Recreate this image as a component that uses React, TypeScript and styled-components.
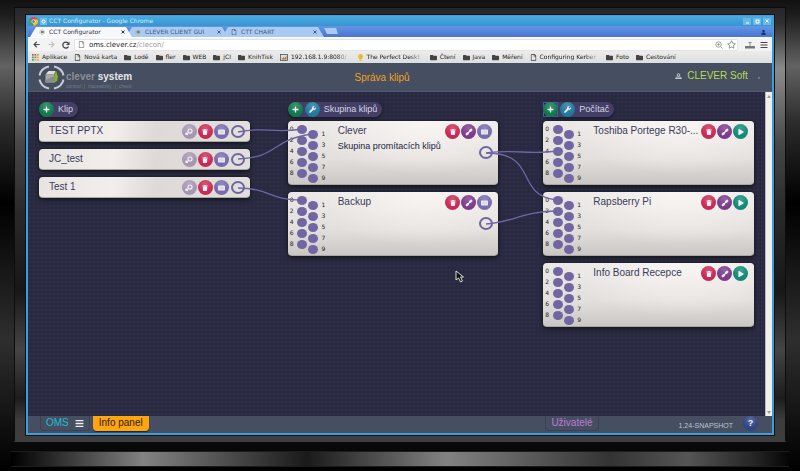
import React from "react";
import styled, { createGlobalStyle, css } from "styled-components";
import {
  FaPlus,
  FaWrench,
  FaTrash,
  FaLink,
  FaPlay,
  FaUser,
  FaFolder,
  FaBars,
  FaRegStar,
  FaRegFile,
  FaLightbulb,
  FaArrowLeft,
  FaArrowRight,
} from "react-icons/fa";

const sans = `"Liberation Sans", Arial, sans-serif`;
const ui = `"DejaVu Sans", Verdana, sans-serif`;

const GlobalStyle = createGlobalStyle`
  * { box-sizing: border-box; }
  body { margin: 0; background: #000; font-family: ${sans}; }
  button { font: inherit; padding: 0; margin: 0; border: 0; background: none; color: inherit; cursor: pointer; }
  a { color: inherit; text-decoration: none; }
  h1, h2, h3, p { margin: 0; font-weight: 400; }
  svg { display: block; flex: none; }
`;

/* ---------- display housing ---------- */

const Screen = styled.div`
  min-height: 100vh;
  display: flex;
  flex-direction: column;
  padding: 7px 14px 4px;
  background: linear-gradient(#121212 0%, #1c1c1c 3%, #626262 14%, #2c2c2c 26%, #000 43%, #2e2e2e 72%, #0c0c0c 93%, #000 100%);
`;

const Bezel = styled.div`
  flex: 1;
  display: flex;
  padding: 7px 11px 6px 11px;
  border: 1px solid #0c0c0c;
  border-bottom-color: #3e3e3e;
  background: linear-gradient(#262626 0%, #333 4%, #8a8a8a 14%, #7d7d7d 18%, #454545 32%, #282828 48%, #171717 65%, #454545 79%, #1c1c1c 90%, #3c3c3c 95%, #3e3e3e 100%);
`;

const Stand = styled.div`
  height: 16px;
  margin: 9px -3px 0;
  border-top: 1px solid #1c1c1c;
  border-bottom: 1px solid #1c1c1c;
  background: linear-gradient(90deg, #000 0%, #262626 5%, #828282 17%, #1a1a1a 38%, #828282 56%, #333 77%, #555 87%, #222 96%, #050505 100%);
`;

const Browser = styled.div`
  flex: 1;
  min-width: 0;
  display: flex;
  flex-direction: column;
  border: 2px solid #3d9cdb;
  border-top-width: 1px;
  outline: 1px solid #111;
  background: #2a2b42;
`;

/* ---------- browser chrome ---------- */

const TitleBar = styled.div`
  display: flex;
  align-items: center;
  gap: 2px;
  height: 10px;
  padding: 0 1px;
  background: linear-gradient(#49abe0, #3794d2);
  color: #d5ecfa;
  font: 6px/10px ${ui};
`;

const TitleText = styled.h1`
  flex: 1;
  font: inherit;
`;

const WindowButton = styled.button`
  width: 8px;
  height: 7px;
  background: #68b9e8;
  display: grid;
  place-items: center;
  color: #fff;
`;

const TabStrip = styled.div`
  display: flex;
  align-items: flex-end;
  height: 11px;
  padding-left: 2px;
  background: linear-gradient(#6496e6, #4974cf);
`;

const Tab = styled.button<{ $active?: boolean }>`
  display: flex;
  align-items: center;
  gap: 4px;
  width: 102px;
  height: 10px;
  margin-right: -6px;
  padding: 0 7px 0 9px;
  position: relative;
  z-index: ${(p) => (p.$active ? 1 : 0)};
  clip-path: polygon(0 100%, 6px 0, calc(100% - 6px) 0, 100% 100%);
  background: ${(p) => (p.$active ? "#f6f8fb" : "#a9cbf3")};
  color: ${(p) => (p.$active ? "#333" : "#3f5878")};
  font: 6px/10px ${ui};
  white-space: nowrap;
  text-align: left;
  & > span { flex: 1; }
`;

const NewTab = styled.button`
  width: 14px;
  height: 6px;
  margin: 0 0 3px 6px;
  background: #a9cbf3;
  clip-path: polygon(0 0, 12px 0, 100% 100%, 3px 100%);
`;

const UserBadge = styled.button`
  display: grid;
  place-items: center;
  width: 12px;
  height: 8px;
  margin: 0 3px 1px auto;
  color: #16316b;
`;

const Toolbar = styled.div`
  display: flex;
  align-items: center;
  gap: 7px;
  height: 14px;
  padding: 0 4px;
  background: #f3f3f3;
  border-top: 1px solid #fff;
  color: #4b4b4b;
`;

const IconButton = styled.button<{ $dim?: boolean }>`
  display: grid;
  place-items: center;
  width: 8px;
  height: 10px;
  color: ${(p) => (p.$dim ? "#c0c0c0" : "#444")};
`;

const Omnibox = styled.div`
  flex: 1;
  display: flex;
  align-items: center;
  gap: 4px;
  height: 12px;
  margin-left: -3px;
  padding: 0 1px 0 3px;
  border: 1px solid #e4e4e4;
  border-radius: 2px;
  background: #fff;
  color: #888;
`;

const Address = styled.div`
  flex: 1;
  min-width: 0;
  font: 7px/10px ${ui};
  color: #999;
  b { font-weight: 400; color: #222; }
`;

const Bookmarks = styled.nav`
  display: flex;
  align-items: center;
  gap: 7px;
  height: 12px;
  padding: 0 4px;
  overflow: hidden;
  background: linear-gradient(#ececec, #dedede);
  color: #222;
  font: 6px/12px ${ui};
  white-space: nowrap;
`;

const Bookmark = styled.a<{ $fade?: boolean }>`
  display: flex;
  align-items: center;
  gap: 3px;
  svg { color: #444; }
  ${(p) =>
    p.$fade &&
    css`
      padding-right: 3px;
      mask-image: linear-gradient(90deg, #000 80%, #0003 96%);
    `}
`;

const BulbIcon = styled.span`
  && svg { color: #e9b91c; }
`;

/* ---------- application ---------- */

const AppHeader = styled.header`
  display: grid;
  grid-template-columns: 1fr auto 1fr;
  align-items: center;
  height: 29px;
  padding: 0 12px 0 10px;
  border-bottom: 1px solid #4f5b70;
  background: #464e61;
`;

const PageTitle = styled.h2`
  padding: 1px 34px 0 0;
  color: #f0a11c;
  font: 10px/12px ${sans};
`;

const Brand = styled.a`
  display: flex;
  align-items: center;
  gap: 1px;
`;

const BrandText = styled.span`
  display: flex;
  flex-direction: column;
  padding-top: 5px;
  color: #8c8f96;
  font: bold 10px/12px ${sans};
  em { font-style: normal; color: #e6e6e6; }
`;

const Motto = styled.small`
  color: #747a87;
  font: 5px/6px ${sans};
  white-space: pre;
  i { font-style: normal; color: #6d9a1c; }
`;

const Account = styled.button`
  justify-self: end;
  display: flex;
  align-items: center;
  gap: 5px;
  margin-bottom: 3px;
  color: #b5dc4a;
  font: 10px/12px ${sans};
  span { margin-left: 5px; color: #d7dae0; font-size: 8px; }
`;

const Viewport = styled.div`
  flex: 1;
  display: flex;
`;

const Canvas = styled.main`
  position: relative;
  flex: 1;
  display: grid;
  grid-template-columns: 1fr 38px 1fr 45px 1fr;
  align-items: start;
  padding: 10px 11px;
  background-color: #2a2b42;
  background-image: radial-gradient(#2c2d46 1px, transparent 1px), radial-gradient(#282940 1px, transparent 1px);
  background-size: 4px 4px;
  background-position: 0 0, 2px 2px;
`;

const Column = styled.section<{ $slot: number }>`
  grid-column: ${(p) => p.$slot};
  min-width: 0;
  display: flex;
  flex-direction: column;
  align-items: flex-start;
  gap: 7px;
`;

const ColumnHead = styled.div`
  display: flex;
  align-items: center;
  gap: 2px;
  height: 15px;
  margin-bottom: -3px;
  padding-right: 5px;
  border-radius: 8px;
  background: #433f66;
  box-shadow: 0 2px 3px #1b1c2c;
  color: #d6d6e4;
  h3 { margin-left: 2px; font: 9px/15px ${sans}; }
`;

const tones = {
  green: "#0f7a4c",
  blue: "#21789f",
  red: "#c82a55",
  violet: "#7a3b8c",
  slate: "#766bab",
  mauve: "#a596b2",
  teal: "#128a78",
  navy: "#2f4585",
};
type Tone = keyof typeof tones;

const Round = styled.button<{ $tone: Tone }>`
  flex: none;
  display: grid;
  place-items: center;
  width: 15px;
  height: 15px;
  border-radius: 50%;
  background: radial-gradient(circle at 50% 25%, #ffffff33, transparent 60%), ${(p) => tones[p.$tone]};
  color: #f5eef5;
  font: bold 9px/15px ${sans};
`;

const FocusFrame = styled.span<{ $on?: boolean }>`
  display: flex;
  box-shadow: ${(p) => (p.$on ? "inset 0 0 0 1px #3c5fae" : "none")};
`;

const Card = styled.article<{ $tall?: boolean }>`
  width: 100%;
  display: flex;
  height: ${(p) => (p.$tall ? 64 : 21)}px;
  border-radius: 4px;
  border-bottom: 1px solid #aaa6a3;
  background: ${(p) =>
    p.$tall
      ? "radial-gradient(ellipse at 65% 0%, #f8f5f2 0%, #f8f5f200 60%), linear-gradient(#ebe8e5 0%, #e3dfdc 60%, #cbc7c4 100%)"
      : "linear-gradient(100deg, #e8e4e1 0%, #f1eeeb 35%, #dedad7 55%, #e2dfdc 100%)"};
  box-shadow: 0 2px 4px #14181c, 0 0 2px #14181c;
  color: #3a3b5c;
`;

const CardText = styled.div<{ $ported?: boolean }>`
  flex: 1;
  min-width: 0;
  padding: ${(p) => (p.$ported ? "3px 0 0 14px" : "3px 0 0 10px")};
  h3 { font: 10px/13px ${sans}; white-space: nowrap; }
  p { margin-top: 3px; font: 9px/13px ${sans}; color: #23243f; white-space: nowrap; }
`;

const Side = styled.div`
  flex: none;
  display: flex;
  flex-direction: column;
  align-items: flex-end;
  padding: 3px 6px 0 0;
  gap: 7px;
`;

const Actions = styled.div`
  display: flex;
  align-items: center;
  gap: 1px;
`;

const Outlet = styled.button`
  flex: none;
  width: 14px;
  height: 13px;
  margin: 0 -1px 0 1px;
  border: 2px solid #6f659f;
  border-radius: 50%;
`;

const PortBlock = styled.div`
  flex: none;
  display: flex;
  gap: 1px;
  width: 36px;
  padding-left: 2px;
`;

const PortColumn = styled.div<{ $odd?: boolean }>`
  display: flex;
  flex-direction: column;
  justify-content: space-between;
  height: 52px;
  margin-top: ${(p) => (p.$odd ? 9 : 4)}px;
`;

const Port = styled.div<{ $odd?: boolean }>`
  display: flex;
  align-items: center;
  flex-direction: ${(p) => (p.$odd ? "row-reverse" : "row")};
  gap: ${(p) => (p.$odd ? 3 : 4)}px;
  height: 8px;
  font: 6px/8px ${ui};
  color: #222;
`;

const Dot = styled.button`
  width: 10px;
  height: 9px;
  border-radius: 50%;
  background: #7165a2;
`;

const Wires = styled.svg`
  position: absolute;
  left: 0;
  top: 0;
  width: 100%;
  height: 324px;
  pointer-events: none;
`;

const Pointer = styled.svg`
  position: absolute;
  left: 427px;
  top: 178px;
`;

const ScrollBar = styled.div`
  width: 7px;
  display: flex;
  flex-direction: column;
  justify-content: space-between;
  border-left: 1px solid #b9b9c0;
  background: #f1f0ef;
  button { height: 8px; display: grid; place-items: center; color: #999; }
`;

const Footer = styled.footer`
  display: flex;
  align-items: flex-start;
  gap: 3px;
  height: 17px;
  padding: 0 14px 0 12px;
  background: #464e61;
`;

const FooterTab = styled.button<{ $kind: "menu" | "active" | "users" }>`
  display: flex;
  align-items: center;
  justify-content: center;
  gap: 6px;
  height: 15px;
  padding: 0 5px;
  border: 1px solid #3b4254;
  border-top: 0;
  border-radius: 0 0 4px 4px;
  font: 10px/14px ${sans};
  color: ${(p) => (p.$kind === "menu" ? "#22bcd8" : "#c07bd6")};
  svg { color: #eee; }
  ${(p) =>
    p.$kind === "active" &&
    css`
      border-color: #ffa510;
      background: #ffa510;
      color: #2a1c00;
      box-shadow: 0 1px 1px #1d2029;
    `}
  ${(p) => p.$kind === "users" && "margin-left: auto;"}
`;

const Version = styled.span`
  margin: 4px 7px 0 77px;
  color: #bfc4d0;
  font: 7px/12px ${sans};
`;

/* ---------- drawings ---------- */

const ChromeLogo = () => (
  <svg width="9" height="9" viewBox="0 0 18 18">
    <circle cx="9" cy="9" r="9" fill="#e8453c" />
    <path d="M9 9 1.2 4.5A9 9 0 0 0 9 18Z" fill="#3aa757" />
    <path d="M9 9V18A9 9 0 0 0 17 5H9Z" fill="#fbc116" />
    <circle cx="9" cy="9" r="4" fill="#fff" />
    <circle cx="9" cy="9" r="3" fill="#4285f4" />
  </svg>
);

const Pin = () => (
  <svg width="7" height="7" viewBox="0 0 14 14">
    <rect width="14" height="14" fill="#69bdec" />
    <circle cx="7" cy="7" r="3" fill="none" stroke="#fff" strokeWidth="2" />
  </svg>
);

const Favicon = () => (
  <svg width="6" height="6" viewBox="0 0 10 10">
    <circle cx="5" cy="5" r="4" fill="none" stroke="#aaa" strokeDasharray="3 1" />
    <rect x="3" y="3" width="4" height="4" fill="#777" />
    <rect x="6" y="3" width="2" height="4" fill="#79a82a" />
  </svg>
);

const Cross = () => (
  <svg width="4" height="4" viewBox="0 0 8 8" stroke="currentColor" strokeWidth="2">
    <path d="M1 1 7 7M7 1 1 7" />
  </svg>
);

const Reload = () => (
  <svg width="8" height="8" viewBox="0 0 16 16">
    <path d="M13 11A6 6 0 1 1 12 4" fill="none" stroke="currentColor" strokeWidth="2.6" />
    <path d="M15 1V8H8Z" fill="currentColor" />
  </svg>
);

const AppsGrid = () => (
  <svg width="7" height="7" viewBox="0 0 14 14">
    {["#e0453c", "#e0453c", "#e8882a", "#3aa757", "#4285f4", "#e8b21a", "#3aa757", "#e8b21a", "#e8b21a"].map((c, i) => (
      <rect key={i} x={(i % 3) * 5} y={Math.floor(i / 3) * 5} width="3.4" height="3.4" fill={c} />
    ))}
  </svg>
);

const Chip = () => (
  <svg width="8" height="7" viewBox="0 0 16 14">
    <rect x="1" y="1" width="14" height="12" fill="#ddd" stroke="#555" strokeWidth="1.6" />
    <path d="m3 11 4-5 2 3 4-6v8Z" fill="#a07a3a" />
  </svg>
);

const Tray = () => (
  <svg width="10" height="8" viewBox="0 0 20 16">
    <rect y="10" width="20" height="5" fill="#777" />
    <path d="M10 10V3M7 3h6" stroke="#888" strokeWidth="2" />
  </svg>
);

const Lens = () => (
  <svg width="8" height="8" viewBox="0 0 16 16" fill="none" stroke="#888" strokeWidth="1.6">
    <circle cx="7" cy="7" r="5.4" />
    <path d="m11 11 4 4M4.5 7h5M7 4.5v5" />
  </svg>
);

const Person = () => (
  <svg width="7" height="6" viewBox="0 0 14 12" fill="none" stroke="#c2c6cf" strokeWidth="2">
    <circle cx="7" cy="4" r="2.6" />
    <path d="M1 11 3 8h8l2 3Z" />
  </svg>
);

const BrandMark = () => (
  <svg width="27" height="25" viewBox="0 0 54 50">
    <g fill="none" stroke="#c9ccd1" strokeWidth="4">
      <path d="M3 21A24 23 0 0 1 22 3" />
      <path d="M32 3A24 23 0 0 1 51 21" />
      <path d="M51 29A24 23 0 0 1 32 47" />
      <path d="M22 47A24 23 0 0 1 3 29" />
    </g>
    <path d="m15 19 6-7h14l-3 7Z" fill="#dcdcdc" />
    <rect x="15" y="19" width="18" height="16" fill="#a9a9ab" />
    <path d="m15 30 18-8v13H15Z" fill="#8b8b8e" />
    <path d="m33 19 3-7 4 11-2 9-5 3Z" fill="#80b81e" />
  </svg>
);

const Listing = () => (
  <svg width="7" height="6" viewBox="0 0 16 14">
    <rect x="0" y="1" width="16" height="12" rx="2" fill="#efedf6" />
    <path d="M3 5h10M3 9h10" stroke="#b9b3d6" strokeWidth="1.4" />
  </svg>
);

const Magnifier = () => (
  <svg width="8" height="8" viewBox="0 0 16 16" fill="none" stroke="#f4f0f6" strokeWidth="2.2">
    <circle cx="10" cy="6" r="4" />
    <path d="m7 9-5 4M2 9v4h4" />
  </svg>
);

const ChainLink = () => (
  <svg width="8" height="8" viewBox="0 0 16 16" fill="none" stroke="#f0e6f4" strokeLinecap="round">
    <path d="M5.5 10.5 10.5 5.5" strokeWidth="2.4" />
    <path d="M3.6 12.4 5.4 10.6M10.6 5.4 12.4 3.6" strokeWidth="5" />
  </svg>
);

/* ---------- data and composition ---------- */

type Action = "find" | "delete" | "list" | "link" | "play";
const actionMap: Record<Action, { tone: Tone; label: string; icon: React.ReactNode }> = {
  find: { tone: "mauve", label: "Náhled", icon: <Magnifier /> },
  delete: { tone: "red", label: "Smazat", icon: <FaTrash size={6} /> },
  list: { tone: "slate", label: "Seznam", icon: <Listing /> },
  link: { tone: "violet", label: "Propojit", icon: <ChainLink /> },
  play: { tone: "teal", label: "Spustit", icon: <FaPlay size={6} /> },
};

const ActionRow = ({ actions, children }: { actions: Action[]; children?: React.ReactNode }) => (
  <Actions>
    {actions.map((a) => (
      <Round key={a} $tone={actionMap[a].tone} aria-label={actionMap[a].label}>
        {actionMap[a].icon}
      </Round>
    ))}
    {children}
  </Actions>
);

const Ports = () => (
  <PortBlock>
    {[0, 1].map((odd) => (
      <PortColumn key={odd} $odd={!!odd}>
        {[0, 2, 4, 6, 8].map((n) => (
          <Port key={n} $odd={!!odd}>
            <span>{n + odd}</span>
            <Dot aria-label={`Vstup ${n + odd}`} />
          </Port>
        ))}
      </PortColumn>
    ))}
  </PortBlock>
);

const Head = ({ title, wrench, focus }: { title: string; wrench?: boolean; focus?: boolean }) => (
  <ColumnHead>
    <FocusFrame $on={focus}>
      <Round $tone="green" aria-label={`Přidat: ${title}`}>
        <FaPlus size={7} />
      </Round>
    </FocusFrame>
    {wrench && (
      <Round $tone="blue" aria-label={`Nastavit: ${title}`}>
        <FaWrench size={7} />
      </Round>
    )}
    <h3>{title}</h3>
  </ColumnHead>
);

const clips = ["TEST PPTX", "JC_test", "Test 1"];
const groups: { name: string; note?: string }[] = [
  { name: "Clever", note: "Skupina promítacích klipů" },
  { name: "Backup" },
];
const computers = ["Toshiba Portege R30-...", "Rapsberry Pi", "Info Board Recepce"];

const folder = <FaFolder size={7} />;
const page = <FaRegFile size={7} />;
const bookmarks: { text: string; icon: React.ReactNode; fade?: boolean }[] = [
  { text: "Aplikace", icon: <AppsGrid /> },
  { text: "Nová karta", icon: page },
  { text: "Lodě", icon: folder },
  { text: "fler", icon: folder },
  { text: "WEB", icon: folder },
  { text: "jCI", icon: folder },
  { text: "KnihTisk", icon: folder },
  { text: "192.168.1.9:8080/", icon: <Chip />, fade: true },
  { text: "The Perfect Deskt", icon: <BulbIcon><FaLightbulb size={7} /></BulbIcon>, fade: true },
  { text: "Čtení", icon: folder },
  { text: "Java", icon: folder },
  { text: "Měření", icon: folder },
  { text: "Configuring Kerber", icon: page, fade: true },
  { text: "Foto", icon: folder },
  { text: "Cestování", icon: folder },
];

const wires = [
  "M238 132C265 126 272 134 302 129",
  "M238 159C280 157 270 140 312 134",
  "M238 188C270 188 268 200 302 200",
  "M486 153C515 149 530 155 557 151",
  "M486 153C540 153 513 195 557 200",
  "M486 224C513 222 525 211 557 211",
];

export default function App() {
  return (
    <Screen>
      <GlobalStyle />
      <Bezel>
        <Browser>
          <TitleBar>
            <ChromeLogo />
            <Pin />
            <TitleText>CCT Configurator - Google Chrome</TitleText>
            <WindowButton aria-label="Minimalizovat">
              <svg width="5" height="5" viewBox="0 0 5 5"><path d="M1 4h3" stroke="#fff" /></svg>
            </WindowButton>
            <WindowButton aria-label="Maximalizovat">
              <svg width="5" height="5" viewBox="0 0 5 5"><path d="M1 1h3v3H1Z" stroke="#fff" fill="none" /></svg>
            </WindowButton>
            <WindowButton aria-label="Zavřít"><Cross /></WindowButton>
          </TitleBar>
          <TabStrip>
            <Tab $active><Favicon /><span>CCT Configurator</span><Cross /></Tab>
            <Tab><Favicon /><span>CLEVER CLIENT GUI</span><Cross /></Tab>
            <Tab><FaRegFile size={6} /><span>CTT CHART</span><Cross /></Tab>
            <NewTab aria-label="Nová karta" />
            <UserBadge aria-label="Profil"><FaUser size={5} /></UserBadge>
          </TabStrip>
          <Toolbar>
            <IconButton aria-label="Zpět"><FaArrowLeft size={7} /></IconButton>
            <IconButton $dim aria-label="Vpřed"><FaArrowRight size={7} /></IconButton>
            <IconButton aria-label="Obnovit"><Reload /></IconButton>
            <Omnibox>
              <FaRegFile size={7} />
              <Address><b>oms.clever.cz</b>/clecon/</Address>
              <Lens />
              <FaRegStar size={9} />
            </Omnibox>
            <IconButton aria-label="Rozšíření"><Tray /></IconButton>
            <IconButton aria-label="Nabídka"><FaBars size={8} /></IconButton>
          </Toolbar>
          <Bookmarks>
            {bookmarks.map((b) => (
              <Bookmark key={b.text} href="#" $fade={b.fade}>{b.icon}{b.text}</Bookmark>
            ))}
          </Bookmarks>

          <AppHeader>
            <Brand href="#">
              <BrandMark />
              <BrandText>
                <span>clever <em>system</em></span>
                <Motto>{"control  "}<i>|</i>{"  traceability  "}<i>|</i>{"  check"}</Motto>
              </BrandText>
            </Brand>
            <PageTitle>Správa klipů</PageTitle>
            <Account><Person />CLEVER Soft<span>,</span></Account>
          </AppHeader>

          <Viewport>
            <Canvas>
              <Column $slot={1}>
                <Head title="Klip" />
                {clips.map((c) => (
                  <Card key={c}>
                    <CardText><h3>{c}</h3></CardText>
                    <Side>
                      <ActionRow actions={["find", "delete", "list"]}><Outlet aria-label={`Výstup ${c}`} /></ActionRow>
                    </Side>
                  </Card>
                ))}
              </Column>
              <Column $slot={3}>
                <Head title="Skupina klipů" wrench />
                {groups.map((g) => (
                  <Card key={g.name} $tall>
                    <Ports />
                    <CardText $ported><h3>{g.name}</h3>{g.note && <p>{g.note}</p>}</CardText>
                    <Side>
                      <ActionRow actions={["delete", "link", "list"]} />
                      <Outlet aria-label={`Výstup ${g.name}`} />
                    </Side>
                  </Card>
                ))}
              </Column>
              <Column $slot={5}>
                <Head title="Počítač" wrench focus />
                {computers.map((c) => (
                  <Card key={c} $tall>
                    <Ports />
                    <CardText $ported><h3>{c}</h3></CardText>
                    <Side><ActionRow actions={["delete", "link", "play"]} /></Side>
                  </Card>
                ))}
              </Column>
              <Wires viewBox="28 92 737 324" preserveAspectRatio="none" fill="none" stroke="#7066a4" strokeWidth="1.3">
                {wires.map((d) => <path key={d} d={d} />)}
              </Wires>
              <Pointer width="9" height="13" viewBox="0 0 18 26">
                <path d="M2 2v18l5-4 4 8 4-2-4-8h6Z" fill="#111" stroke="#ddd" strokeWidth="2" />
              </Pointer>
            </Canvas>
            <ScrollBar>
              <button aria-label="Nahoru"><svg width="4" height="3" viewBox="0 0 4 3"><path d="M0 3 2 0l2 3Z" fill="currentColor" /></svg></button>
              <button aria-label="Dolů"><svg width="4" height="3" viewBox="0 0 4 3"><path d="m0 0 2 3 2-3Z" fill="currentColor" /></svg></button>
            </ScrollBar>
          </Viewport>

          <Footer>
            <FooterTab $kind="menu">OMS<FaBars size={9} /></FooterTab>
            <FooterTab $kind="active">Info panel</FooterTab>
            <FooterTab $kind="users">Uživatelé</FooterTab>
            <Version>1.24-SNAPSHOT</Version>
            <Round $tone="navy" aria-label="Nápověda">?</Round>
          </Footer>
        </Browser>
      </Bezel>
      <Stand />
    </Screen>
  );
}
